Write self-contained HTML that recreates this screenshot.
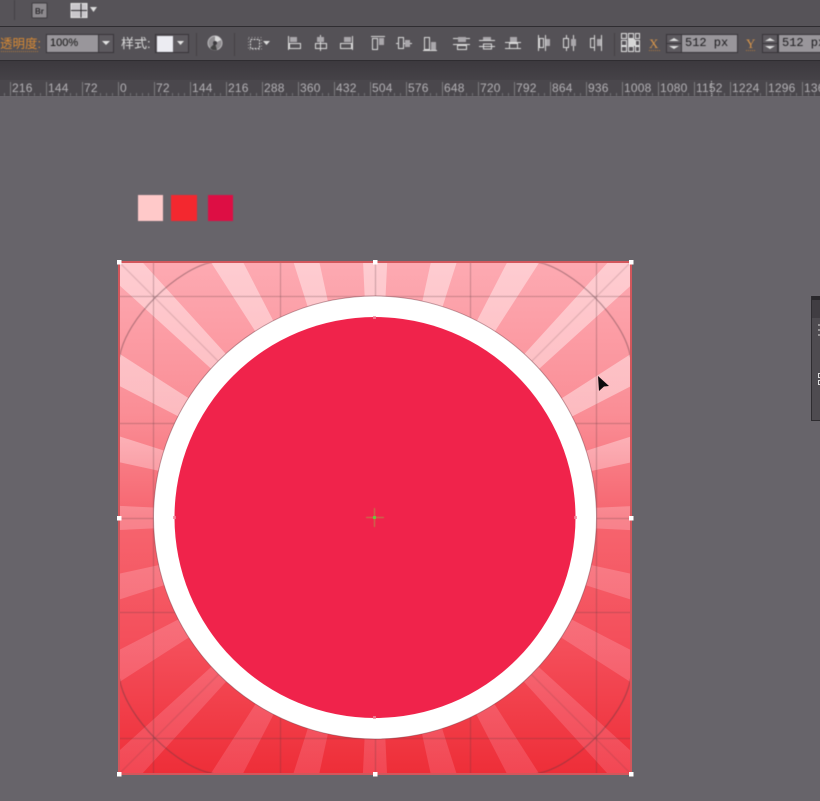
<!DOCTYPE html>
<html>
<head>
<meta charset="utf-8">
<style>
html,body{margin:0;padding:0;background:#67646a;width:820px;height:801px;overflow:hidden}
svg{display:block;position:absolute;left:0;top:0}
text{font-family:"Liberation Sans","Noto Sans CJK SC",sans-serif}
.r{font-size:12px;fill:#b4b2b6;letter-spacing:.2px}
.m{font-family:"Liberation Mono",monospace;font-size:12px;fill:#1c1b1e}
.i{fill:none;stroke:#dcdcdc;stroke-width:1}
.f{fill:#a9a7ab}
.soft{filter:blur(.4px)}
</style>
</head>
<body>
<svg width="820" height="801" viewBox="0 0 820 801" xmlns="http://www.w3.org/2000/svg">
<defs>
<linearGradient id="bg" gradientUnits="userSpaceOnUse" x1="0" y1="262" x2="0" y2="774">
<stop offset="0" stop-color="#fdaab2"/>
<stop offset=".3" stop-color="#fa8d95"/>
<stop offset=".5" stop-color="#f6656f"/>
<stop offset=".75" stop-color="#f44e5a"/>
<stop offset="1" stop-color="#ee2e38"/>
</linearGradient>
<linearGradient id="ray" gradientUnits="userSpaceOnUse" x1="0" y1="262" x2="0" y2="774">
<stop offset="0" stop-color="#ffe8ea" stop-opacity=".55"/>
<stop offset=".3" stop-color="#ffe8ea" stop-opacity=".5"/>
<stop offset=".5" stop-color="#ffd8de" stop-opacity=".27"/>
<stop offset=".75" stop-color="#ffc0cc" stop-opacity=".24"/>
<stop offset="1" stop-color="#ffa0b4" stop-opacity=".22"/>
</linearGradient>
<linearGradient id="dark" x1="0" y1="0" x2="0" y2="1">
<stop offset="0" stop-color="#3c393e"/>
<stop offset="1" stop-color="#454247"/>
</linearGradient>
<clipPath id="ab"><rect x="119" y="262" width="512" height="512"/></clipPath>
</defs>

<!-- canvas -->
<rect width="820" height="801" fill="#67646a"/>

<!-- top bars -->
<rect width="820" height="26" fill="#565358"/>
<rect y="26" width="820" height="1" fill="#2f2d31"/>
<rect y="27" width="820" height="33" fill="#545156"/>
<rect y="60" width="820" height="1" fill="#2f2d31"/>
<rect y="61" width="820" height="19" fill="url(#dark)"/>
<rect y="80" width="820" height="16" fill="#4a474c"/>

<g class="soft">
<!-- app bar icons -->
<rect x="14" y="0" width="1" height="20" fill="#444146"/>
<rect x="32" y="3" width="15" height="15" rx="1" fill="#8d8a8e" stroke="#3e3c40"/>
<text x="35" y="14" font-size="8" font-weight="bold" fill="#2c2a2e">Br</text>
<rect x="71" y="3.500" width="16" height="14" fill="#c9c7cb" stroke="#e6e6e6"/>
<path d="M71 10.500H81M81 3.500V17.500M81 10.500H87" stroke="#2e2c30" fill="none"/>
<path d="M90 7h7l-3.500 5z" fill="#ddd"/>

<!-- options bar -->
<text x="0" y="48" font-size="12.500" fill="#d98a33">透明度:</text>
<path d="M1 51.500H39" stroke="#d98a33" stroke-dasharray="1 1" opacity=".7"/>
<rect x="46.500" y="34.500" width="52" height="18" fill="#99969b" stroke="#38363a"/>
<text x="50" y="46" font-size="11" fill="#111">100%</text>
<rect x="98.500" y="34.500" width="15" height="18" fill="#5d5a5f" stroke="#38363a"/>
<path d="M102 41h8l-4 4z" fill="#e4e4e4"/>
<text x="121" y="48" font-size="13" fill="#dcdcdc">样式:</text>
<rect x="155.500" y="34.500" width="33" height="18" fill="#5d5a5f" stroke="#38363a"/>
<rect x="157" y="36" width="16" height="16" fill="#ececf2"/>
<path d="M177 41h7l-3.500 4z" fill="#e4e4e4"/>
<rect x="196" y="33" width="1" height="23" fill="#444146"/>
<circle cx="215" cy="43" r="7" fill="#8f8d90" stroke="#bdbbbe"/>
<path d="M215 43L215 36A7 7 0 0 1 221 40z" fill="#d9d9d9"/>
<path d="M215 43L210 48A7 7 0 0 0 217 50z" fill="#444"/>
<circle cx="215" cy="43" r="2" fill="#3c3a3e"/>
<rect x="234" y="33" width="1" height="23" fill="#444146"/>

<!-- transform icon -->
<rect x="250.500" y="39.500" width="9" height="9" class="i" stroke-dasharray="2 1"/>
<rect x="248.500" y="37.500" width="13" height="12" class="i" stroke-dasharray="1 2" opacity=".6"/>
<path d="M263 41h7l-3.500 4z" fill="#ddd"/>

<!-- align icons -->
<path class="i" d="M288.500 36V50"/><rect class="f" x="290" y="37" width="7" height="5"/><rect class="i" x="289.500" y="43.500" width="11" height="5"/>
<path class="i" d="M320.500 35V51"/><rect class="f" x="317" y="37" width="7" height="5"/><rect class="i" x="315.500" y="43.500" width="11" height="5"/>
<path class="i" d="M352.500 36V50"/><rect class="f" x="344" y="37" width="7" height="5"/><rect class="i" x="340.500" y="43.500" width="11" height="5"/>
<path class="i" d="M371 36.500H385"/><rect class="i" x="372.500" y="38.500" width="5" height="11"/><rect class="f" x="379" y="38" width="5" height="7"/>
<path class="i" d="M396 43.500H412"/><rect x="398.500" y="37.500" width="5" height="11" fill="#545156" stroke="#dcdcdc"/><rect class="f" x="405" y="40" width="5" height="7"/>
<path class="i" d="M423 50.500H437"/><rect class="i" x="424.500" y="37.500" width="5" height="12"/><rect class="f" x="431" y="42" width="5" height="8"/>
<path class="i" d="M453 38.500H470"/><rect class="f" x="458" y="37" width="8" height="5"/><path class="i" d="M453 44.500H470"/><rect class="i" x="457.500" y="45.500" width="9" height="4"/>
<path class="i" d="M479 40.500H495M479 46.500H495"/><rect class="f" x="483" y="37" width="8" height="3"/><rect class="i" x="483.500" y="44" width="8" height="5"/>
<path class="i" d="M505 42.500H521M505 48.500H521"/><rect class="f" x="510" y="37" width="7" height="5"/><rect class="i" x="509.500" y="43.500" width="8" height="5"/>
<path class="i" d="M538.500 35V51"/><rect class="i" x="539.500" y="38.500" width="4" height="9"/><path class="i" d="M545.500 35V51"/><rect class="f" x="546" y="39" width="4" height="7"/>
<path class="i" d="M566.500 35V51M573.500 35V51"/><rect x="563.500" y="38.500" width="5" height="9" fill="#545156" stroke="#dcdcdc"/><rect class="f" x="571" y="39" width="5" height="7"/>
<path class="i" d="M601.500 35V51M594.500 35V51"/><rect class="i" x="590.500" y="38.500" width="4" height="9"/><rect class="f" x="597" y="39" width="4" height="7"/>
<rect x="614" y="33" width="1" height="23" fill="#444146"/>

<!-- reference point grid -->
<g fill="none" stroke="#e2e2e2">
<rect x="621.500" y="33.500" width="5" height="5"/><rect x="628.500" y="33.500" width="5" height="5"/><rect x="635.500" y="33.500" width="4" height="5"/>
<rect x="621.500" y="40.500" width="5" height="5"/><rect x="635.500" y="40.500" width="4" height="5"/>
<rect x="621.500" y="46.500" width="5" height="5"/><rect x="628.500" y="46.500" width="5" height="5"/><rect x="635.500" y="46.500" width="4" height="5"/>
</g>
<rect x="628" y="39" width="7" height="7" fill="#d6d6d6"/>

<!-- X -->
<text x="649" y="48" font-size="13" fill="#d9964a" style="font-family:'Liberation Serif',serif">X</text>
<path d="M649 50.500H661" stroke="#d98a33" stroke-dasharray="1 1" opacity=".7"/>
<rect x="666.500" y="34.500" width="15" height="18" fill="#5d5a5f" stroke="#38363a"/>
<path d="M666 43.500H681" stroke="#38363a"/>
<path d="M669 41l5-3 5 3zM669 46l5 3 5-3z" fill="#dedede"/>
<rect x="681.500" y="34.500" width="56" height="18" fill="#99969b" stroke="#38363a"/>
<text class="m" x="685" y="46">512 px</text>

<!-- Y -->
<text x="746" y="48" font-size="13" fill="#d9964a" style="font-family:'Liberation Serif',serif">Y</text>
<path d="M746 50.500H756" stroke="#d98a33" stroke-dasharray="1 1" opacity=".7"/>
<rect x="762.500" y="34.500" width="15" height="18" fill="#5d5a5f" stroke="#38363a"/>
<path d="M762 43.500H777" stroke="#38363a"/>
<path d="M765 41l5-3 5 3zM765 46l5 3 5-3z" fill="#dedede"/>
<rect x="778.500" y="34.500" width="50" height="18" fill="#99969b" stroke="#38363a"/>
<text class="m" x="782" y="46">512 px</text>

<!-- ruler -->
<path d="M1 94.500H820" stroke="#a8a6aa" stroke-width="3" stroke-dasharray="1 5" stroke-dashoffset="-3" opacity=".45"/>
<path d="M10.500 82V96M46.500 82V96M82.500 82V96M118.500 82V96M154.500 82V96M190.500 82V96M226.500 82V96M262.500 82V96M298.500 82V96M334.500 82V96M370.500 82V96M406.500 82V96M442.500 82V96M478.500 82V96M514.500 82V96M550.500 82V96M586.500 82V96M622.500 82V96M658.500 82V96M694.500 82V96M730.500 82V96M766.500 82V96M802.500 82V96" stroke="#7f7d81"/>
<text class="r" x="12" y="92">216</text><text class="r" x="48" y="92">144</text><text class="r" x="84" y="92">72</text><text class="r" x="120" y="92">0</text>
<text class="r" x="156" y="92">72</text><text class="r" x="192" y="92">144</text><text class="r" x="228" y="92">216</text><text class="r" x="264" y="92">288</text>
<text class="r" x="300" y="92">360</text><text class="r" x="336" y="92">432</text><text class="r" x="372" y="92">504</text><text class="r" x="408" y="92">576</text>
<text class="r" x="444" y="92">648</text><text class="r" x="480" y="92">720</text><text class="r" x="516" y="92">792</text><text class="r" x="552" y="92">864</text>
<text class="r" x="588" y="92">936</text><text class="r" x="624" y="92">1008</text><text class="r" x="660" y="92">1080</text><text class="r" x="696" y="92">1152</text>
<text class="r" x="732" y="92">1224</text><text class="r" x="768" y="92">1296</text><text class="r" x="804" y="92">136</text>
<path d="M711.500 81V96" stroke="#ddd" stroke-dasharray="1 1"/>
</g>

<!-- swatches -->
<g class="soft">
<rect x="138" y="195" width="25" height="26" fill="#ffc9c9"/>
<rect x="171" y="195" width="26" height="26" fill="#f3282f"/>
<rect x="208" y="195" width="25" height="26" fill="#dd0e44"/>
</g>

<!-- artboard -->
<rect x="119" y="262" width="512" height="512" fill="url(#bg)"/>
<g clip-path="url(#ab)">
<circle cx="375" cy="518" r="250" fill="none" stroke="url(#ray)" stroke-width="500" stroke-dasharray="23.56 41.89" stroke-dashoffset="11.78"/>
</g>

<!-- guides -->
<g class="soft" fill="none" stroke="#5a3a42" stroke-opacity=".32" stroke-width="1">
<path d="M153.500 262V774M280.500 262V774M375.500 262V774M470.500 262V774M596.500 262V774"/>
<path d="M119 296.500H631M119 423.500H631M119 518.500H631M119 612.500H631M119 738.500H631"/>
<path d="M119 262L631 774M631 262L119 774" stroke-opacity=".2"/>
<path stroke-opacity=".5" d="M213 262C178 268 126 318 119.500 357M119.500 679C126 718 178 768 213 773.500M537 773.500C572 768 624 718 630.500 679M630.500 357C624 318 572 268 537 262"/>
</g>

<!-- circles -->
<circle cx="375" cy="517.500" r="221.500" fill="#fff" stroke="#7a3a44" stroke-opacity=".45" stroke-width="1"/>
<circle cx="375" cy="517.500" r="200.500" fill="#f0234b"/>

<!-- artboard selection border -->
<rect x="119" y="262" width="512" height="512" fill="none" stroke="#d2575c" stroke-width="2"/>

<!-- handles -->
<g fill="#fff">
<rect x="117" y="260" width="4.500" height="4.500"/><rect x="373" y="260" width="4.500" height="4.500"/><rect x="629" y="260" width="4.500" height="4.500"/>
<rect x="117" y="516" width="4.500" height="4.500"/><rect x="629" y="516" width="4.500" height="4.500"/>
<rect x="117" y="772" width="4.500" height="4.500"/><rect x="373" y="772" width="4.500" height="4.500"/><rect x="629" y="772" width="4.500" height="4.500"/>
</g>
<g fill="#f08a9c" opacity=".8">
<rect x="373" y="316" width="3" height="3"/><rect x="173" y="516" width="3" height="3"/><rect x="574" y="516" width="3" height="3"/><rect x="373" y="716" width="3" height="3"/>
</g>

<!-- centre cross -->
<path class="soft" d="M366 517.500H384M374.500 508V527" stroke="#b6864a" stroke-width="1"/>
<rect x="373" y="516" width="3" height="3" fill="#6fc040"/>

<!-- cursor -->
<path d="M598 376L609 386L604 386.500L599 391z" fill="#0c0c0e"/>

<!-- right panel -->
<rect x="811.500" y="296.500" width="10" height="124" fill="#4e4b50" stroke="#2e2c30"/>
<rect x="812" y="296" width="8" height="4" fill="#2a282c"/>
<rect x="812" y="300" width="8" height="18" fill="#403d42"/>
<path d="M818 325h2M818 330h2M818 335h2" stroke="#ddd"/>
<rect x="818.500" y="373.500" width="3" height="4" fill="none" stroke="#ddd"/>
<rect x="818.500" y="380.500" width="3" height="4" fill="none" stroke="#ddd"/>
</svg>
</body>
</html>
